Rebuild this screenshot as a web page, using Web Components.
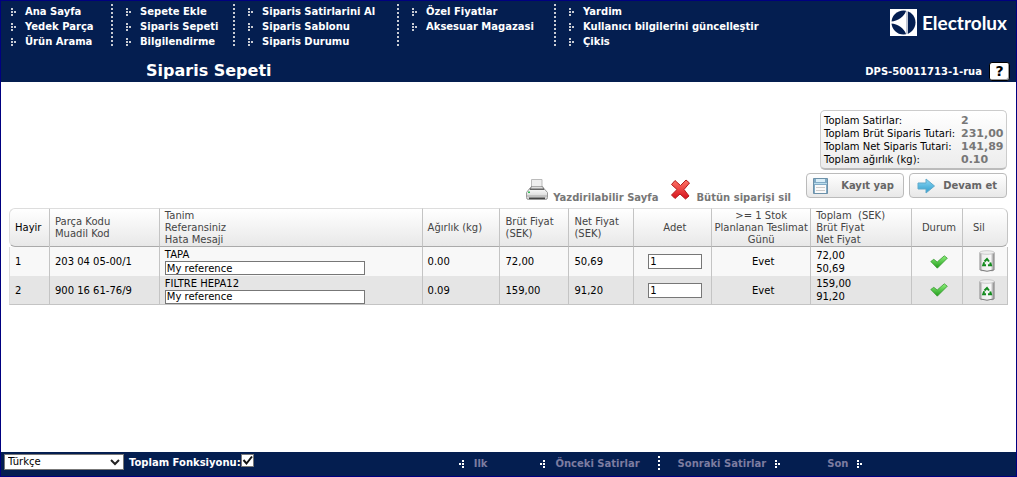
<!DOCTYPE html>
<html lang="tr">
<head>
<meta charset="utf-8">
<title>Siparis Sepeti</title>
<style>
html,body{margin:0;height:100%}
body{font:10px/15px "DejaVu Sans",sans-serif;color:#000}
</style>
</head>
<body>
<order-app></order-app>
<script>
const define = (name, html, setup) => customElements.define(name, class extends HTMLElement {
  constructor() {
    super();
    this.attachShadow({ mode: 'open' }).innerHTML = '<style>*{box-sizing:border-box}:host([hidden]){display:none}</style>' + html;
  }
  connectedCallback() { if (setup) setup.call(this, this.shadowRoot); }
});

const DOTS = {
  right: '<path d="M1 0h2v2h-2zM1 3h2v2h-2zM1 6h2v2h-2zM4 3h2v2h-2z"/>',
  left: '<path d="M4 0h2v2h-2zM4 3h2v2h-2zM4 6h2v2h-2zM1 3h2v2h-2z"/>',
  grid: '<path d="M0 0h2v2h-2zM3 0h2v2h-2zM6 0h2v2h-2zM0 3h2v2h-2zM3 3h2v2h-2zM6 3h2v2h-2zM0 6h2v2h-2zM3 6h2v2h-2zM6 6h2v2h-2z"/>'
};
define('dot-mark', `<style>:host{display:block;flex:none;width:8px;height:8px;color:#c8cbd3}svg{display:block}</style>
<svg width="8" height="8" fill="currentColor" shape-rendering="crispEdges"></svg>`, function (root) {
  root.querySelector('svg').innerHTML = DOTS[this.getAttribute('kind') || 'right'];
});

define('nav-link', `<style>:host{display:block}a{display:flex;align-items:flex-start;gap:7px;color:#fff;font-weight:bold;text-decoration:none;white-space:nowrap}dot-mark{margin-top:4px}</style>
<a href="#"><dot-mark></dot-mark><slot></slot></a>`, function (root) {
  if (this.hasAttribute('current')) root.querySelector('dot-mark').setAttribute('kind', 'grid');
});

define('nav-column', `<style>:host{display:flex;flex-direction:column;height:45px}
:host([divided]){background:repeating-linear-gradient(#c8cbd3 0 2px,transparent 2px 4px) right 0/2px 43px no-repeat}</style><slot></slot>`);

define('brand-logo', `<style>:host{display:flex;align-items:center;gap:5px;color:#fff;font:bold 19px/27px Lato,sans-serif}svg{display:block}</style>
<svg width="27" height="27" viewBox="0 0 27 27"><path fill="#fff" d="M0 0h27v27H0z"/><circle cx="13.500" cy="13.500" r="12" fill="#041e50"/><path fill="#fff" d="M1 12.500C8 12 14 8 16 2v23C14 19 8 15 1 14.500z"/><path stroke="#fff" stroke-width="1.500" d="M17 1v25"/></svg>
<span>Electrolux</span>`);

define('app-header', `<style>
:host{display:block;background:#041e50;color:#fff}
.top{display:flex;justify-content:space-between;align-items:flex-start;padding:3px 9px 0 9px}
nav{display:flex}
nav-column{margin-right:12px}
nav-column:last-child{margin:0}
.c1{width:103px}.c2{width:110px}.c3{width:152px}.c4{width:145px}.c1,.c2,.c3,.c4{flex:none}
brand-logo{margin-top:5px}
.title{display:flex;align-items:center;justify-content:space-between;padding:11px 6px 0 145px;height:33px}
h1{margin:0;font-size:16px;line-height:20px}
.user{display:flex;align-items:center;gap:7px;font-weight:bold}
button{width:21px;height:19px;padding:0;border:1px solid #000;border-radius:3px;background:#fff;box-shadow:inset -1px -1px #999;font:bold 14px/16px "DejaVu Sans",sans-serif;color:#000}
</style>
<div class="top"><nav>
<nav-column divided class="c1"><nav-link>Ana Sayfa</nav-link><nav-link>Yedek Parça</nav-link><nav-link>Ürün Arama</nav-link></nav-column>
<nav-column divided class="c2"><nav-link>Sepete Ekle</nav-link><nav-link current>Siparis Sepeti</nav-link><nav-link>Bilgilendirme</nav-link></nav-column>
<nav-column divided class="c3"><nav-link>Siparis Satirlarini Al</nav-link><nav-link>Siparis Sablonu</nav-link><nav-link>Siparis Durumu</nav-link></nav-column>
<nav-column divided class="c4"><nav-link>Özel Fiyatlar</nav-link><nav-link>Aksesuar Magazasi</nav-link></nav-column>
<nav-column><nav-link>Yardim</nav-link><nav-link>Kullanıcı bilgilerini güncelleştir</nav-link><nav-link>Çikis</nav-link></nav-column>
</nav><brand-logo></brand-logo></div>
<div class="title"><h1>Siparis Sepeti</h1><div class="user"><span>DPS-50011713-1-rua</span><button type="button" aria-label="Yardim">?</button></div></div>`);

define('order-totals', `<style>
:host{display:block;border:1px solid #ccc;border-bottom:2px solid #bbb;border-radius:5px;background:linear-gradient(#fff,#ececec);padding:3px 2px 2px 3px;width:187px}
dl{display:grid;grid-template-columns:137px 1fr;margin:0;line-height:13px;white-space:nowrap}
dd{margin:0;font-weight:bold;font-size:11px;color:#777}
</style><dl><dt>Toplam Satirlar:</dt><dd>2</dd><dt>Toplam Brüt Siparis Tutari:</dt><dd>231,00</dd><dt>Toplam Net Siparis Tutari:</dt><dd>141,89</dd><dt>Toplam ağırlık (kg):</dt><dd>0.10</dd></dl>`);

define('action-button', `<style>
:host{display:block}button{display:flex;align-items:center;justify-content:space-between;width:98px;height:25px;padding:0 9px 0 6px;border:1px solid #bbb;border-radius:4px;background:linear-gradient(#fff,#e8e8e8);font:bold 10px/15px "DejaVu Sans",sans-serif;color:#666;white-space:nowrap}
</style><button type="button"><slot name="icon"></slot><slot></slot></button>`);

define('tool-link', `<style>:host{display:block}a{display:flex;align-items:flex-end;gap:5px;font-weight:bold;color:#777;text-decoration:none;white-space:nowrap}span{line-height:13px}::slotted(svg){margin-bottom:2px}</style>
<a href="#"><slot name="icon"></slot><span><slot></slot></span></a>`);

define('order-toolbar', `<style>
:host{display:flex;flex-direction:column;align-items:flex-end;padding:28px 9px 0 9px}
.row{display:flex;align-items:flex-end;margin-top:3px}
tool-link{margin-right:12px}
tool-link+tool-link{margin-right:15px}
action-button{margin-bottom:6px}
action-button+action-button{margin-left:5px}
svg{display:block}
</style>
<order-totals></order-totals>
<div class="row">
<tool-link><svg slot="icon" width="22" height="24" viewBox="0 0 22 24"><defs><linearGradient id="p" x2="0" y2="1"><stop stop-color="#fff"/><stop offset="1" stop-color="#ccc"/></linearGradient></defs><path d="M5.500 1.500h10.500v9H5.500z" fill="#eee" stroke="#bbb"/><path d="M4 10h13.500l4 4.500v5q0 2-2 2H2.500q-2 0-2-2v-5z" fill="url(#p)" stroke="#999"/><path d="M5 8.500h12l1.500 3.500h-15z" fill="#666"/><path d="M5.500 9h11l.5 1.500H5z" fill="#ddd"/><path d="M1 17.500h20v1H1z" fill="#aaa"/><path d="M3 19.500h16v1.500H3z" fill="#444"/><path d="M2 13.500h2v1.500H2z" fill="#3b5"/></svg>Yazdirilabilir Sayfa</tool-link>
<tool-link><svg slot="icon" width="21" height="24" viewBox="0 0 21 24"><defs><linearGradient id="x" x2="0" y2="1"><stop stop-color="#ff7668"/><stop offset="1" stop-color="#d6101b"/></linearGradient></defs><path d="M1.500 6.500l3.500-4 5.500 5 5.500-5.500 3.500 3-5.500 6.500 5 6.500-3.500 3-5.500-5L5 20.500l-3.500-3.500 5.500-5.500z" fill="url(#x)" stroke="#b21b1b" stroke-linejoin="round"/></svg>Bütün siparişi sil</tool-link>
<action-button><svg slot="icon" width="15" height="16" viewBox="0 0 15 16"><path d="M.5.5h14v15H.5z" fill="#82abc6" stroke="#6d91a9"/><path d="M3 1h9v3H3z" fill="#d9eef8"/><path d="M1 5h13v1H1z" fill="#b9dcec"/><path d="M2 7h11v8H2z" fill="#fafafa"/><path d="M3 9.500h9M3 12.500h9" stroke="#ccc"/></svg>Kayıt yap</action-button>
<action-button><svg slot="icon" width="20" height="16" viewBox="0 0 20 16"><defs><linearGradient id="a" x2="0" y2="1"><stop stop-color="#8bd8f5"/><stop offset="1" stop-color="#2f9ccc"/></linearGradient></defs><path d="M2 5h8V1l8.500 7-8.500 7v-4H2z" fill="url(#a)" stroke="#60aacb"/></svg>Devam et</action-button>
</div>`);

define('status-check', `<style>:host{display:inline-block;vertical-align:middle}svg{display:block}</style>
<svg width="18" height="14" viewBox="0 0 18 14"><defs><linearGradient id="g" x2="0" y2="1"><stop stop-color="#8df27b"/><stop offset="1" stop-color="#219b1b"/></linearGradient></defs><path d="M.8 6.500l3-2.200 3.400 2.700L14.300.8l3 2.400L7.300 13.200z" fill="url(#g)" stroke="#3c9b35" stroke-width=".8" stroke-linejoin="round"/></svg>`);

define('delete-button', `<style>:host{display:inline-block;vertical-align:middle}button{display:block;border:0;padding:0;background:none}svg{display:block}</style>
<button type="button" aria-label="Sil"><svg width="16" height="23" viewBox="0 0 16 23"><defs><linearGradient id="b"><stop stop-color="#888"/><stop offset=".2" stop-color="#eee"/><stop offset=".75" stop-color="#f8f8f8"/><stop offset="1" stop-color="#777"/></linearGradient></defs><path d="M.5 2.500h15v17q-1 2.500-7.500 2.500T.5 19.500z" fill="url(#b)"/><ellipse cx="8" cy="2.500" rx="7.300" ry="1.800" fill="#eee" stroke="#bbb" stroke-width=".7"/><path d="M1.500 20q6.500 2.500 13 0" fill="none" stroke="#777"/><g fill="none" stroke="#138b1e" stroke-width="2"><path d="M5.500 11.500L8 9l2 2.500"/><path d="M11.200 12.500l.8 2.700H9"/><path d="M7 15.200H4.200l1-3"/></g></svg></button>`);

define('order-table', `<style>
:host{display:block;padding:4px 8px 0}
table{width:100%;table-layout:fixed;border-collapse:separate;border-spacing:0}
th,td{padding:0 0 0 5px;text-align:left;border-right:1px solid #c4c4c4;line-height:13px;white-space:nowrap}
th{height:39px;border-top:1px solid #ddd;border-bottom:1px solid #aaa;background:linear-gradient(#fff,#e8e8e8);font-weight:normal;color:#444;line-height:12px}
th.d{color:#000}
th:first-child,td:first-child{border-left:1px solid #ddd}
th:first-child{border-radius:6px 0 0 6px}
th:last-child{border-radius:0 6px 6px 0}
td{height:29px;background:#f8f8f8}
tr:last-child td{background:#e5e5e5;border-bottom:1px solid #c4c4c4}
.m{text-align:center;padding:0 0 0 4px}
th.w{padding:0}
th.s{padding-left:10px}
td:nth-child(7){padding-left:14px}
label{display:block}
input{display:block;height:14px;padding:0 1px;margin:0;border:1px solid #777;border-radius:0;background:#fff;font:10px/12px "DejaVu Sans",sans-serif;color:#000}
.r{width:200px}.q{width:54px;height:15px}
</style>
<table><colgroup><col style="width:4.100%"><col style="width:11%"><col style="width:26.300%"><col style="width:7.800%"><col style="width:6.900%"><col style="width:6.500%"><col style="width:7.800%"><col style="width:9.900%"><col style="width:10.100%"><col style="width:5.100%"><col></colgroup>
<thead><tr><th class="d">Hayir</th><th>Parça Kodu<br>Muadil Kod</th><th>Tanim<br>Referansiniz<br>Hata Mesaji</th><th>Ağırlık (kg)</th><th>Brüt Fiyat<br>(SEK)</th><th>Net Fiyat<br>(SEK)</th><th class="m">Adet</th><th class="m w">&gt;= 1 Stok<br>Planlanan Teslimat<br>Günü</th><th>Toplam&nbsp; (SEK)<br>Brüt Fiyat<br>Net Fiyat</th><th class="m">Durum</th><th class="s">Sil</th></tr></thead>
<tbody></tbody></table>`, function (root) {
  const rows = [
    ['1', '203 04 05-00/1', 'TAPA', '0.00', '72,00', '50,69'],
    ['2', '900 16 61-76/9', 'FILTRE HEPA12', '0.09', '159,00', '91,20']
  ];
  root.querySelector('tbody').innerHTML = rows.map(([n, code, name, kg, gross, net]) =>
    `<tr><td>${n}</td><td>${code}</td><td><label for="ref${n}">${name}</label><input class="r" id="ref${n}" value="My reference"></td><td>${kg}</td><td>${gross}</td><td>${net}</td><td><input class="q" aria-label="Adet" value="1"></td><td class="m">Evet</td><td>${gross}<br>${net}</td><td class="m"><status-check></status-check></td><td class="m"><delete-button></delete-button></td></tr>`).join('');
});

define('pager-link', `<style>:host{display:block}a{display:flex;align-items:center;gap:8px;color:#7c7ca0;font-weight:bold;text-decoration:none;white-space:nowrap}</style>
<a href="#"><slot></slot></a>`, function (root) {
  const mark = document.createElement('dot-mark');
  mark.style.color = '#fff';
  const next = this.hasAttribute('next');
  mark.setAttribute('kind', next ? 'right' : 'left');
  root.querySelector('a')[next ? 'append' : 'prepend'](mark);
});

define('app-footer', `<style>
:host{display:flex;align-items:flex-start;height:24px;padding:2px 3px 0;background:#041e50;color:#fff;font-weight:bold}
.wrap{display:grid;width:120px;flex:none}
select{grid-area:1/1;appearance:none;height:16px;padding:0 3px;border:1px solid #777;border-radius:0;background:#fff;font:10px/14px "DejaVu Sans",sans-serif;color:#000;width:100%}
.wrap svg{grid-area:1/1;justify-self:end;align-self:center;margin-right:4px;pointer-events:none}
label{margin:1px 0 0 5px;white-space:nowrap}
.tick{display:grid;flex:none}
.tick input{grid-area:1/1;appearance:none;width:13px;height:13px;margin:0;border:1px solid #777;background:#fff}
.tick svg{grid-area:1/1;pointer-events:none}
.pages{display:flex;margin:2px 0 0 204px}
.first{margin-right:52px}.last{margin-left:45px}
.bar{width:2px;height:14px;margin:0 18px;background:repeating-linear-gradient(#fff 0 2px,transparent 2px 4px)}
</style>
<div class="wrap"><select aria-label="Dil"><option>Türkçe</option></select><svg width="10" height="7" fill="none" stroke="#222" stroke-width="2"><path d="M1 1l4 4 4-4"/></svg></div>
<label for="sum">Toplam Fonksiyonu:</label><div class="tick"><input type="checkbox" id="sum" checked><svg width="13" height="13" fill="none" stroke="#111" stroke-width="2"><path d="M2.500 6l3 3.500L11 2.500"/></svg></div>
<div class="pages"><pager-link class="first">Ilk</pager-link><pager-link>Önceki Satirlar</pager-link><div class="bar"></div><pager-link next>Sonraki Satirlar</pager-link><pager-link next class="last">Son</pager-link></div>`);

define('order-app', `<style>
:host{display:flex;flex-direction:column;min-height:100vh;box-sizing:border-box;border:1px solid #000080;background:#fff}
main{flex:1}
</style><app-header></app-header><main><order-toolbar></order-toolbar><order-table></order-table></main><app-footer></app-footer>`);
</script>
</body>
</html>
